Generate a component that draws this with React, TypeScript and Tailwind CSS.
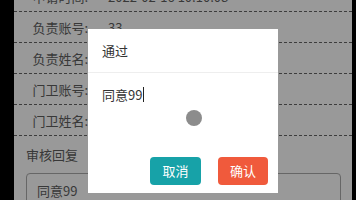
import React from "react";

const font = { fontFamily: '"Noto Sans CJK SC", "Noto Sans", sans-serif' };

const rows = [
  { label: "申请时间:", value: "2022-02-16 10:10:08" },
  { label: "负责账号:", value: "33" },
  { label: "负责姓名:", value: "" },
  { label: "门卫账号:", value: "" },
  { label: "门卫姓名:", value: "" },
];

export default function App() {
  return (
    <div className="w-[356px] h-[200px] flex bg-black overflow-hidden" style={font}>
      <div className="w-[14px] shrink-0 bg-black" />
      <div className="relative flex-1 bg-white overflow-hidden">
        <div className="-mt-[19px] flex flex-col text-[13px] text-[#5e5e5e]">
          {rows.map((r) => (
            <div
              key={r.label}
              className="h-[31px] flex items-center border-b border-dashed border-[#666]"
            >
              <span className="w-[74px] text-right leading-none">{r.label}</span>
              <span className="ml-[20px] leading-none">{r.value}</span>
            </div>
          ))}
          <div className="pl-[12px] pt-[11px] leading-[16px]">审核回复</div>
          <div className="mt-[10px] ml-[12px] mr-[11px] h-[40px] border border-[#aaa] rounded-[4px] pl-[10px] pt-[9px] leading-[16px]">
            同意99
          </div>
        </div>

        <div className="absolute inset-0 bg-black/40" />

        <div className="absolute left-[74px] top-[29px] w-[190px] h-[164px] bg-white flex flex-col">
          <div className="h-[44px] flex items-center pl-[14px] border-b border-[#eeeeee] text-[13px] text-[#333]">
            通过
          </div>
          <div className="flex-1 pl-[14px] pt-[14px] text-[13px] text-[#333] leading-[16px] flex items-start">
            <span>同意99</span>
            <span className="w-px h-[15px] bg-[#222] ml-[1px]" />
          </div>
          <div className="flex justify-end gap-[17px] pr-[10px] pb-[8px]">
            <button className="w-[51px] h-[28px] rounded-[4px] bg-[#17a2a8] text-white text-[13px]">
              取消
            </button>
            <button className="w-[50px] h-[28px] rounded-[4px] bg-[#f05a3c] text-white text-[13px]">
              确认
            </button>
          </div>
        </div>

        <div className="absolute left-[172px] top-[110px] w-[16px] h-[16px] rounded-full bg-[#8c8c8c]" />
      </div>
      <div className="w-[4px] shrink-0 bg-black" />
    </div>
  );
}
